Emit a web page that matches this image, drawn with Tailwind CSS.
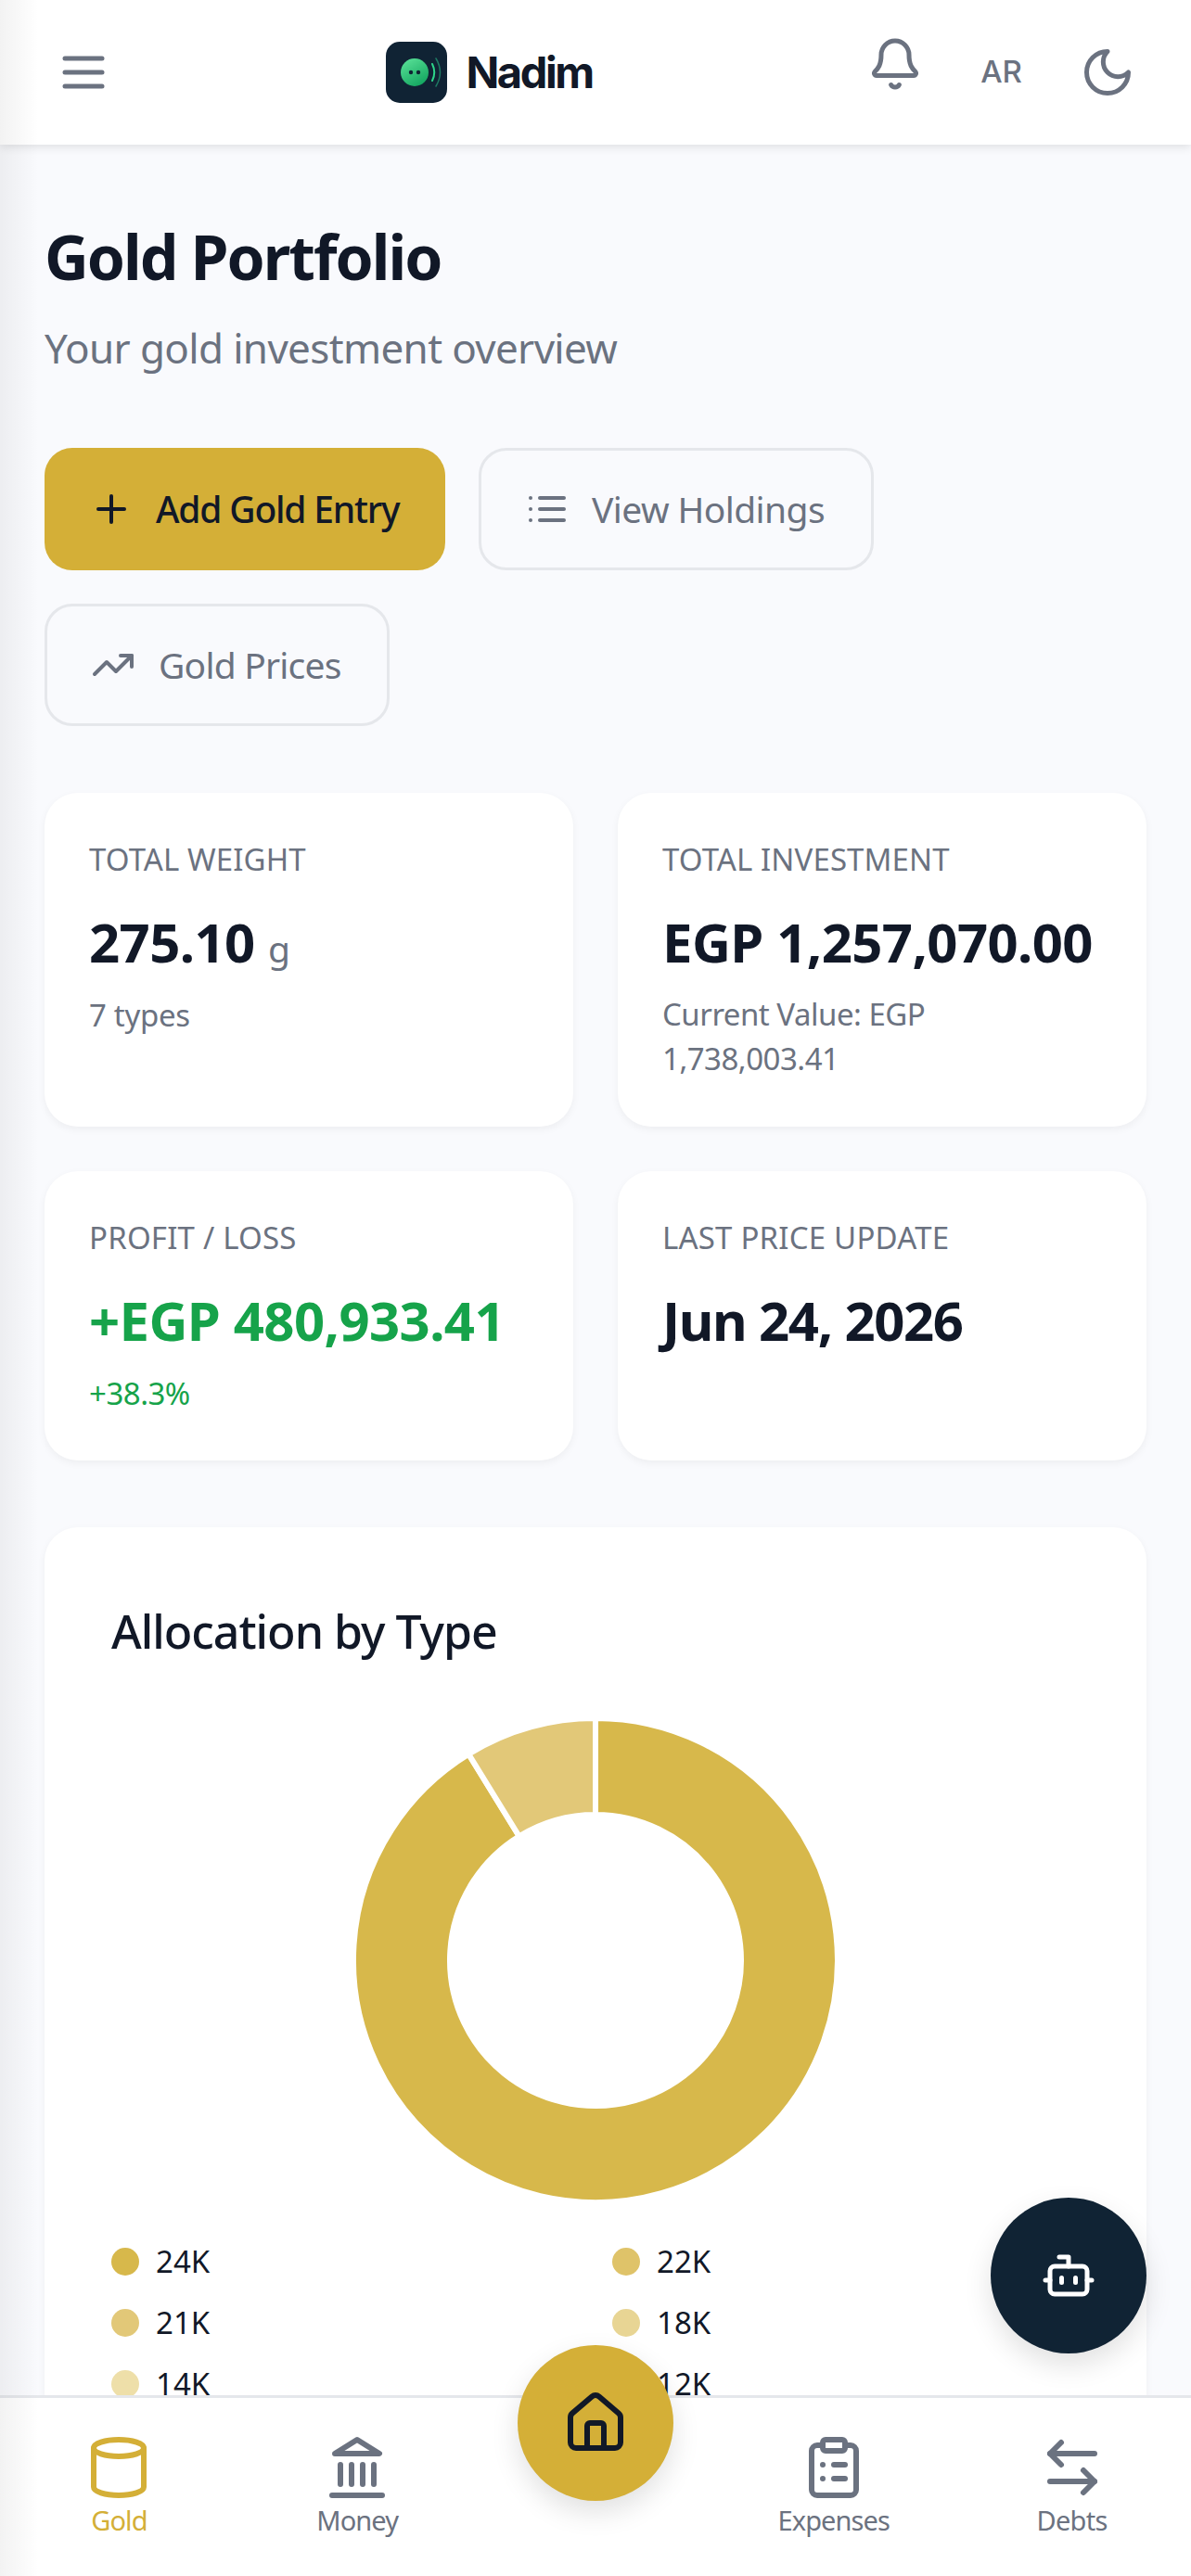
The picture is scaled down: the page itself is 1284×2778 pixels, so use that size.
<!DOCTYPE html>
<html lang="en">
  <head>
    <meta charset="UTF-8" />
    <meta name="viewport" content="width=device-width, initial-scale=1.0" />
    <script src="https://cdn.jsdelivr.net/npm/@tailwindcss/browser@4"></script>
    <title>Gold Portfolio</title>
  </head>
  <body class="bg-[#f8f9fc]">
    <div class="relative flex flex-col h-[2778px] w-[1284px] overflow-hidden bg-[#f9fafd] font-['Noto_Sans',sans-serif] text-[#111827]">
      <!-- header -->
      <header class="relative z-10 flex justify-between items-center h-[156px] shrink-0 bg-white px-[60px] shadow-[0_3px_9px_rgba(0,0,0,0.1)]">
        <svg class="w-[60px] h-[60px] text-[#6b7280]" viewBox="0 0 24 24" fill="none" stroke="currentColor" stroke-width="2" stroke-linecap="round" stroke-linejoin="round"><path d="M4 6h16" /><path d="M4 12h16" /><path d="M4 18h16" /></svg>
        <div class="flex items-center gap-[20px]">
          <svg class="w-[66px] h-[66px]" viewBox="0 0 66 66">
            <defs>
              <linearGradient id="face" x1="0" y1="0" x2="0.6" y2="1"><stop offset="0" stop-color="#5ee59b" /><stop offset="1" stop-color="#16a862" /></linearGradient>
            </defs>
            <rect width="66" height="66" rx="15" fill="#102334" />
            <circle cx="31" cy="33" r="15" fill="url(#face)" />
            <circle cx="27" cy="33" r="2.2" fill="#102334" />
            <circle cx="35" cy="33" r="2.2" fill="#102334" />
            <path d="M50 24c3 6 3 12 0 18" fill="none" stroke="#2dd68a" stroke-width="2" stroke-linecap="round" />
            <path d="M54 18c6 10 6 20 0 30" fill="none" stroke="#1f7a63" stroke-width="1.5" stroke-linecap="round" />
          </svg>
          <span class="font-['Inter',sans-serif] font-bold text-[47px] tracking-[-2.4px]">Nadim</span>
        </div>
        <div class="flex items-center gap-[62px]">
          <svg class="w-[60px] h-[60px] mb-[18px] text-[#6b7280]" viewBox="0 0 24 24" fill="none" stroke="currentColor" stroke-width="2" stroke-linecap="round" stroke-linejoin="round"><path d="M10.268 21a2 2 0 0 0 3.464 0" /><path d="M3.262 15.326A1 1 0 0 0 4 17h16a1 1 0 0 0 .74-1.673C19.41 13.956 18 12.499 18 8A6 6 0 0 0 6 8c0 4.499-1.411 5.956-2.738 7.326" /></svg>
          <span class="font-['Inter',sans-serif] font-medium text-[33px] text-[#6b7280]">AR</span>
          <svg class="w-[60px] h-[60px] text-[#6b7280]" viewBox="0 0 24 24" fill="none" stroke="currentColor" stroke-width="2" stroke-linecap="round" stroke-linejoin="round"><path d="M12 3a6 6 0 0 0 9 9 9 9 0 1 1-9-9Z" /></svg>
        </div>
      </header>

      <main class="flex-1 overflow-hidden px-12 pt-[76px]">
        <h1 class="font-bold text-[66px] leading-[88px] tracking-[-2px]">Gold Portfolio</h1>
        <p class="mt-[22px] text-[44px] leading-[66px] tracking-[-0.65px] text-[#6b7280]">Your gold investment overview</p>

        <div class="mt-[75px] flex flex-wrap gap-x-9 gap-y-[36px]">
          <button class="flex items-center gap-6 w-[432px] h-[132px] px-12 rounded-[30px] bg-[#d4af37] text-[39px] font-medium tracking-[-1.2px] whitespace-nowrap">
            <svg class="w-12 h-12 shrink-0" viewBox="0 0 24 24" fill="none" stroke="currentColor" stroke-width="2" stroke-linecap="round" stroke-linejoin="round"><path d="M5 12h14" /><path d="M12 5v14" /></svg>
            Add Gold Entry
          </button>
          <button class="flex items-center gap-6 w-[426px] h-[132px] px-[47px] rounded-[30px] border-[3px] border-[#e5e7eb] text-[39px] tracking-[-0.6px] text-[#6b7280] whitespace-nowrap">
            <svg class="w-12 h-12 shrink-0" viewBox="0 0 24 24" fill="none" stroke="currentColor" stroke-width="2" stroke-linecap="round" stroke-linejoin="round"><path d="M3 6h.01" /><path d="M8 6h13" /><path d="M3 12h.01" /><path d="M8 12h13" /><path d="M3 18h.01" /><path d="M8 18h13" /></svg>
            View Holdings
          </button>
          <button class="flex items-center gap-[25px] w-[372px] h-[132px] px-[47px] rounded-[30px] border-[3px] border-[#e5e7eb] text-[39px] tracking-[-0.8px] text-[#6b7280] whitespace-nowrap">
            <svg class="w-12 h-12 shrink-0" viewBox="0 0 24 24" fill="none" stroke="currentColor" stroke-width="2" stroke-linecap="round" stroke-linejoin="round"><path d="M16 7h6v6" /><path d="m22 7-8.5 8.5-5-5L2 17" /></svg>
            Gold Prices
          </button>
        </div>

        <div class="mt-[72px] grid grid-cols-2 gap-12">
          <div class="h-[360px] rounded-[36px] bg-white p-12 shadow-[0_3px_9px_rgba(0,0,0,0.05)]">
            <p class="mt-[-6px] text-[33px] leading-[60px] tracking-[0.1px] text-[#6b7280]">TOTAL WEIGHT</p>
            <p class="mt-[21px] font-bold text-[58px] leading-[76px] tracking-[-0.6px]">275.10 <span class="font-normal text-[39px] text-[#6b7280]">g</span></p>
            <p class="mt-[11px] text-[33px] leading-[46px] tracking-[-0.3px] text-[#6b7280]">7 types</p>
          </div>
          <div class="h-[360px] rounded-[36px] bg-white p-12 shadow-[0_3px_9px_rgba(0,0,0,0.05)]">
            <p class="mt-[-6px] text-[33px] leading-[60px] tracking-[0.1px] text-[#6b7280] whitespace-nowrap">TOTAL INVESTMENT</p>
            <p class="mt-[21px] font-bold text-[58px] leading-[76px] tracking-[-0.6px] whitespace-nowrap">EGP 1,257,070.00</p>
            <p class="mt-[16px] text-[33px] leading-[48px] tracking-[-0.5px] text-[#6b7280]">Current Value: EGP 1,738,003.41</p>
          </div>
          <div class="h-[312px] rounded-[36px] bg-white p-12 shadow-[0_3px_9px_rgba(0,0,0,0.05)]">
            <p class="mt-[-6px] text-[33px] leading-[60px] tracking-[0.2px] text-[#6b7280]">PROFIT / LOSS</p>
            <p class="mt-[21px] font-bold text-[58px] leading-[76px] tracking-[-0.6px] text-[#16a34a] whitespace-nowrap">+EGP 480,933.41</p>
            <p class="mt-[18px] text-[33px] leading-[46px] tracking-[-0.5px] text-[#16a34a]">+38.3%</p>
          </div>
          <div class="h-[312px] rounded-[36px] bg-white p-12 shadow-[0_3px_9px_rgba(0,0,0,0.05)]">
            <p class="mt-[-6px] text-[33px] leading-[60px] tracking-[0.2px] text-[#6b7280] whitespace-nowrap">LAST PRICE UPDATE</p>
            <p class="mt-[21px] font-bold text-[58px] leading-[76px] tracking-[-1.4px]">Jun 24, 2026</p>
          </div>
        </div>

        <section class="mt-[72px] rounded-t-[36px] bg-white px-[72px] pt-[72px] pb-[72px] shadow-[0_3px_9px_rgba(0,0,0,0.05)]">
          <h2 class="mt-[-2px] font-medium text-[50px] leading-[84px] tracking-[-1px]">Allocation by Type</h2>
          <svg class="mx-auto mt-[49px] block w-[528px] h-[528px]" viewBox="-264 -264 528 528">
            <path d="M0 -261A261 261 0 1 1 -136.8 -222.3L-82.3 -133.7A157 157 0 1 0 0 -157Z" fill="#d7b84b" stroke="#fff" stroke-width="6" />
            <path d="M-136.8 -222.3A261 261 0 0 1 0 -261L0 -157A157 157 0 0 0 -82.3 -133.7Z" fill="#e2c878" stroke="#fff" stroke-width="6" />
          </svg>
          <div class="mt-[37px] grid grid-cols-2 gap-x-9 gap-y-[18px] text-[33px] leading-[48px]">
            <div class="flex items-center gap-[18px]"><span class="w-[30px] h-[30px] rounded-full bg-[#d7b84b]"></span>24K</div>
            <div class="flex items-center gap-[18px]"><span class="w-[30px] h-[30px] rounded-full bg-[#dfc369]"></span>22K</div>
            <div class="flex items-center gap-[18px]"><span class="w-[30px] h-[30px] rounded-full bg-[#e2c878]"></span>21K</div>
            <div class="flex items-center gap-[18px]"><span class="w-[30px] h-[30px] rounded-full bg-[#e8d594]"></span>18K</div>
            <div class="flex items-center gap-[18px]"><span class="w-[30px] h-[30px] rounded-full bg-[#eedfa9]"></span>14K</div>
            <div class="flex items-center gap-[18px]"><span class="w-[30px] h-[30px] rounded-full bg-[#f1e6bc]"></span>12K</div>
          </div>
        </section>
      </main>

      <!-- bottom nav -->
      <nav class="relative z-10 grid grid-cols-5 h-[195px] shrink-0 border-t-[3px] border-[#e5e7eb] bg-white pt-[39px] text-[#6b7280]">
        <a class="flex flex-col items-center text-[#d4af37]">
          <svg class="w-[72px] h-[72px]" viewBox="0 0 24 24" fill="none" stroke="currentColor" stroke-width="2" stroke-linecap="round" stroke-linejoin="round"><ellipse cx="12" cy="5" rx="9" ry="3" /><path d="M3 5v14a9 3 0 0 0 18 0V5" /></svg>
          <span class="text-[29px] leading-[42px] tracking-[-0.9px]">Gold</span>
        </a>
        <a class="flex flex-col items-center">
          <svg class="w-[72px] h-[72px]" viewBox="0 0 24 24" fill="none" stroke="currentColor" stroke-width="2" stroke-linecap="round" stroke-linejoin="round"><path d="M3 22h18" /><path d="M6 18v-7" /><path d="M10 18v-7" /><path d="M14 18v-7" /><path d="M18 18v-7" /><path d="M12 2l8 5H4z" /></svg>
          <span class="text-[29px] leading-[42px] tracking-[-0.9px]">Money</span>
        </a>
        <div></div>
        <a class="flex flex-col items-center">
          <svg class="w-[72px] h-[72px]" viewBox="0 0 24 24" fill="none" stroke="currentColor" stroke-width="2" stroke-linecap="round" stroke-linejoin="round"><rect x="8" y="2" width="8" height="4" rx="1" /><path d="M16 4h2a2 2 0 0 1 2 2v14a2 2 0 0 1-2 2H6a2 2 0 0 1-2-2V6a2 2 0 0 1 2-2h2" /><path d="M12 11h4" /><path d="M12 16h4" /><path d="M8 11h.01" /><path d="M8 16h.01" /></svg>
          <span class="text-[29px] leading-[42px] tracking-[-0.9px]">Expenses</span>
        </a>
        <a class="flex flex-col items-center">
          <svg class="w-[72px] h-[72px]" viewBox="0 0 24 24" fill="none" stroke="currentColor" stroke-width="2" stroke-linecap="round" stroke-linejoin="round"><path d="M8 3 4 7l4 4" /><path d="M4 7h16" /><path d="m16 21 4-4-4-4" /><path d="M20 17H4" /></svg>
          <span class="text-[29px] leading-[42px] tracking-[-0.7px]">Debts</span>
        </a>
      </nav>

      <!-- floating buttons -->
      <button class="absolute z-20 left-[558px] top-[2529px] flex items-center justify-center w-[168px] h-[168px] rounded-full bg-[#d4af37] shadow-[0_12px_30px_rgba(0,0,0,0.12)]">
        <svg class="w-[72px] h-[72px]" viewBox="0 0 24 24" fill="none" stroke="#111827" stroke-width="2" stroke-linecap="round" stroke-linejoin="round"><path d="M15 21v-8a1 1 0 0 0-1-1h-4a1 1 0 0 0-1 1v8" /><path d="M3 10a2 2 0 0 1 .709-1.528l7-5.999a2 2 0 0 1 2.582 0l7 5.999A2 2 0 0 1 21 10v9a2 2 0 0 1-2 2H5a2 2 0 0 1-2-2z" /></svg>
      </button>
      <button class="absolute z-20 left-[1068px] top-[2370px] flex items-center justify-center w-[168px] h-[168px] rounded-full bg-[#102334] shadow-[0_12px_30px_rgba(0,0,0,0.12)]">
        <svg class="w-[60px] h-[60px]" viewBox="0 0 24 24" fill="none" stroke="#fff" stroke-width="2" stroke-linecap="round" stroke-linejoin="round"><path d="M12 8V4H8" /><rect x="4" y="8" width="16" height="12" rx="2" /><path d="M2 14h2" /><path d="M20 14h2" /><path d="M15 13v2" /><path d="M9 13v2" /></svg>
      </button>
      <!-- faint shadow of the closed drawer -->
      <div class="absolute z-30 inset-y-0 left-0 w-[42px] bg-gradient-to-r from-black/5 to-transparent pointer-events-none"></div>
    </div>
  </body>
</html>
